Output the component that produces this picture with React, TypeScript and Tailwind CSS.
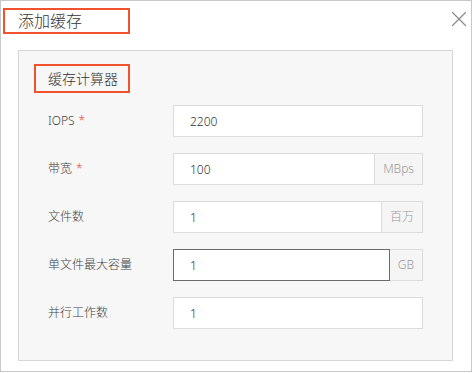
import { X } from "lucide-react";

type Row = {
  label: string;
  value: string;
  required?: boolean;
  addon?: string;
  focused?: boolean;
};

const rows: Row[] = [
  { label: "IOPS", value: "2200", required: true },
  { label: "带宽", value: "100", required: true, addon: "MBps" },
  { label: "文件数", value: "1", addon: "百万" },
  { label: "单文件最大容量", value: "1", addon: "GB", focused: true },
  { label: "并行工作数", value: "1" },
];

function FieldRow({ row }: { row: Row }) {
  return (
    <div className="flex items-center h-8">
      <label className="w-[125px] shrink-0 text-[12px] font-light text-[#444]">
        {row.label}
        {row.required && <span className="ml-1 text-[#e84a3f]">*</span>}
      </label>
      <div className="flex w-[250px] h-8">
        <input
          readOnly
          value={row.value}
          className={
            row.focused
              ? "flex-1 min-w-0 h-8 bg-white border border-[#6b6b6b] pl-4 text-[12px] font-light text-[#333] outline-none"
              : "flex-1 min-w-0 h-8 bg-white border border-[#dcdcdc] pl-4 text-[12px] font-light text-[#333] outline-none"
          }
        />
        {row.addon && (
          <span className="flex items-center px-2 h-8 bg-[#f5f5f5] border border-l-0 border-[#dcdcdc] text-[12px] font-light text-[#999]">
            {row.addon}
          </span>
        )}
      </div>
    </div>
  );
}

export default function App() {
  return (
    <div
      className="w-[472px] h-[372px] bg-white border border-[#c8c8c8] relative"
      style={{ fontFamily: '"Noto Sans", "Noto Sans CJK SC", sans-serif' }}
    >
      <div className="pt-[7px] pl-[2px]">
        <div className="w-[127px] h-[26px] border-2 border-[#f0522d] pl-[13px] flex items-center text-[16px] font-light text-[#333]">
          添加缓存
        </div>
      </div>
      <button className="absolute left-[445px] top-[5px] text-[#8a8a8a]">
        <X size={26} strokeWidth={1.1} />
      </button>

      <div className="ml-[17px] mt-[16px] w-[435px] h-[311px] bg-[#f7f7f7] border border-[#d6d6d6] px-[15px] pt-[13px]">
        <div className="w-[96px] h-[29px] border-2 border-[#f0522d] pl-[12px] flex items-center text-[14px] font-light text-[#333]">
          缓存计算器
        </div>
        <div className="mt-[12px] pl-[14px] flex flex-col gap-4">
          {rows.map((r) => (
            <FieldRow key={r.label} row={r} />
          ))}
        </div>
      </div>
    </div>
  );
}
